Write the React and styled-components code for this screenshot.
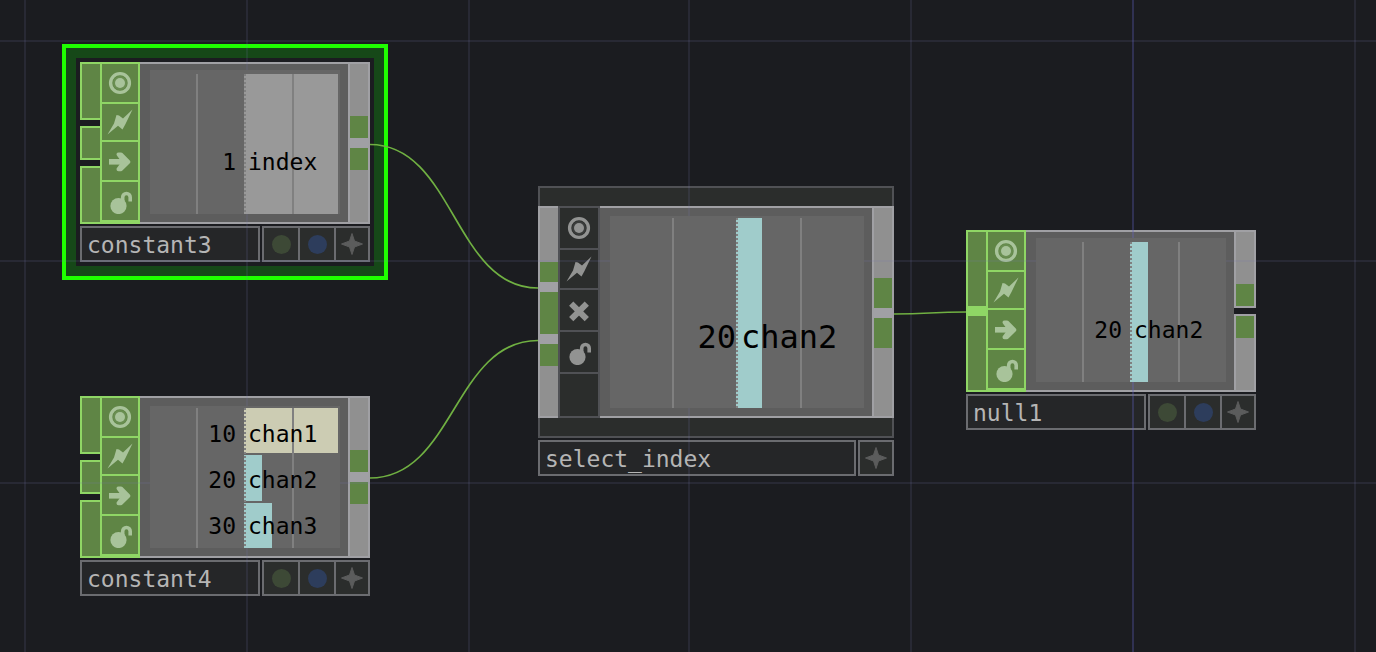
import React, { useState } from 'react';
import { styled, createGlobalStyle } from 'styled-components';

const colors = {
  canvas: '#1b1c20',
  green: '#5f8545',
  greenEdge: '#8fd665',
  grey: '#909090',
  greyEdge: '#a0a0a4',
  dark: '#2b2d2c',
  darkEdge: '#505155',
  footerEdge: '#6b6c70',
};

const slotColors = {
  grey: colors.grey,
  green: colors.green,
  link: colors.greyEdge,
  active: colors.greenEdge,
};

const outLinked = [[['grey', 52], ['green', 22], ['link', 10], ['green', 22], ['grey', 52]]];
const outOpen = [[['grey', 52], ['green', 22]], [['green', 22], ['grey', 52]]];
const inOpen = [[['green', 54]], [['green', 30]], [['green', 54]]];

const nodes = [
  {
    name: 'constant3', x: 80, y: 62, width: 290, lip: 4,
    inputs: inOpen, outputs: outLinked,
    flags: ['view', 'clone', 'bypass', 'lock'],
    channels: [{ value: 1, label: 'index', fill: 100, color: '#999999' }],
  },
  {
    name: 'constant4', x: 80, y: 396, width: 290, lip: 2,
    inputs: inOpen, outputs: outLinked,
    flags: ['view', 'clone', 'bypass', 'lock'],
    channels: [
      { value: 10, label: 'chan1', fill: 100, color: '#ccccb3' },
      { value: 20, label: 'chan2', fill: 19, color: '#a0cccb' },
      { value: 30, label: 'chan3', fill: 30, color: '#a0cccb' },
    ],
  },
  {
    name: 'select_index', x: 538, y: 186, width: 356, large: true, lip: 2,
    inputs: [[['grey', 54], ['green', 20], ['link', 10], ['green', 42], ['link', 10], ['green', 22], ['grey', 50]]],
    outputs: [[['grey', 70], ['green', 30], ['link', 10], ['green', 30], ['grey', 68]]],
    flags: ['view', 'clone', 'cross', 'lock'],
    channels: [{ value: 20, label: 'chan2', fill: 21, color: '#a0cccb' }],
  },
  {
    name: 'null1', x: 966, y: 230, width: 290, lip: 4,
    inputs: [[['green', 74], ['active', 10], ['green', 74]]],
    outputs: outOpen,
    flags: ['view', 'clone', 'bypass', 'lock'],
    channels: [{ value: 20, label: 'chan2', fill: 19, color: '#a0cccb' }],
  },
];

const columns = [24, 246, 468, 688, 910, 1132, 1354];
const rows = [40, 260, 482];

const flagNames = {
  view: 'Viewer active',
  clone: 'Clone immune',
  bypass: 'Bypass',
  cross: 'Bypass',
  lock: 'Lock',
};

const FlagIcon = ({ type }) => (
  <svg width="26" height="26" viewBox="0 0 26 26" aria-hidden="true">
    {type === 'view' && (
      <>
        <circle cx="13" cy="13" r="9.4" fill="none" stroke="currentColor" strokeWidth="3.4" />
        <circle cx="13" cy="13" r="7" fill="currentColor" fillOpacity="0.15" />
        <circle cx="13" cy="13" r="5" fill="currentColor" />
      </>
    )}
    {type === 'clone' && (
      <path d="M0.5 25.500 7 14.500 9.500 6 12 6.500 16 9.500 25.500 0.5 18.500 15 15.500 20.500 11 16.800Z" fill="currentColor" />
    )}
    {type === 'bypass' && (
      <g fill="none" stroke="currentColor" strokeLinejoin="round">
        <path d="M2 13.800H20" strokeWidth="5.600" />
        <path d="M11.500 6.400 14 6.400 21.400 13.800 14 21.200 11.500 21.200 17 13.800Z" strokeWidth="4" />
      </g>
    )}
    {type === 'cross' && (
      <path d="M5.200 6.600 20.800 22.200M20.800 6.600 5.200 22.200" stroke="currentColor" strokeWidth="6" />
    )}
    {type === 'lock' && (
      <>
        <circle cx="11.5" cy="18" r="8.1" fill="currentColor" />
        <path d="M15.700 13V9.200a3.750 3.750 0 0 1 7.500 0V13.500" fill="none" stroke="currentColor" strokeWidth="3.6" />
      </>
    )}
  </svg>
);

const StarIcon = () => (
  <svg width="22" height="22" viewBox="0 0 22 22" aria-hidden="true">
    <path d="M11 0.500 13.500 8 21.500 11 13.500 14 11 21.500 8.500 14 0.500 11 8.500 8Z" fill="#5b5c5c" stroke="#5b5c5c" />
  </svg>
);

const Port = ({ groups, side, tone }) => (
  <PortColumn>
    {groups.map((slots, i) => (
      <PortGroup key={i} $side={side} $tone={tone}>
        {slots.map(([kind, height], j) => (
          <Slot key={j} $kind={kind} $height={height} />
        ))}
      </PortGroup>
    ))}
  </PortColumn>
);

const Node = ({ node, selected, onSelect }) => {
  const { name, x, y, width, large, lip, inputs, outputs, flags, channels } = node;
  return (
    <Frame style={{ left: x, top: y }} $selected={selected} onClick={onSelect}>
      <NodeBox $width={width}>
        {large && <Strip $edge="top" />}
        <Body>
          <Port groups={inputs} side="in" tone={large ? 'grey' : 'green'} />
          <Flags $large={large}>
            {flags.map(flag => (
              <Flag key={flag} type="button" aria-label={flagNames[flag]} $large={large}>
                <FlagIcon type={flag} />
              </Flag>
            ))}
            {large && <FlagBlank />}
          </Flags>
          <Viewer $lip={lip}>
            <Chart $lip={lip}>
              <Channels>
                {channels.map(channel => (
                  <Channel key={channel.label}>
                    <BarTrack>
                      <Bar style={{ width: `${channel.fill}%`, backgroundColor: channel.color }} />
                    </BarTrack>
                  </Channel>
                ))}
                <Guides>
                  <Guide />
                  <Guide $line="solid" />
                  <Guide $line="dotted" />
                  <Guide $line="solid" />
                </Guides>
                <Labels $single={channels.length === 1} $large={large}>
                  {channels.map(channel => (
                    <LabelRow key={channel.label}>
                      <Value $large={large}>{channel.value}</Value>
                      <ChannelName $large={large}>{channel.label}</ChannelName>
                    </LabelRow>
                  ))}
                </Labels>
              </Channels>
            </Chart>
          </Viewer>
          <Port groups={outputs} side="out" tone="grey" />
        </Body>
        {large && <Strip $edge="bottom" />}
        <Footer>
          <NodeName>{name}</NodeName>
          <Actions>
            {!large && (
              <>
                <Action type="button" aria-label="Display"><Dot $color="#3d4936" /></Action>
                <Action type="button" aria-label="Render"><Dot $color="#2d3d5c" /></Action>
              </>
            )}
            <Action type="button" aria-label="Activate viewer"><StarIcon /></Action>
          </Actions>
        </Footer>
      </NodeBox>
    </Frame>
  );
};

const App = () => {
  const [active, setActive] = useState('constant3');
  return (
    <>
      <GlobalStyle />
      <Canvas>
        {nodes.map(node => (
          <Node
            key={node.name}
            node={node}
            selected={node.name === active}
            onSelect={() => setActive(node.name)}
          />
        ))}
        <Network aria-hidden="true">
          {columns.map(x => (
            <rect key={x} x={x} y="0" width="2" height="100%" fill={x === 1132 ? '#6464c8' : '#7878b4'} fillOpacity={x === 1132 ? 0.3 : 0.14} />
          ))}
          {rows.map(y => (
            <rect key={y} x="0" y={y} width="100%" height="2" fill="#7878b4" fillOpacity="0.14" />
          ))}
          <g fill="none" stroke="#70b042" strokeWidth="1.7">
            <path d="M370 144.500C454 144.500 454 288 538 288" />
            <path d="M370 478C454 478 454 340.500 538 340.500" />
            <path d="M894 314C930 314 930 312 966 312" />
          </g>
        </Network>
      </Canvas>
    </>
  );
};

export default App;

const GlobalStyle = createGlobalStyle`
  * {
    box-sizing: border-box;
  }

  body {
    margin: 0;
    background-color: ${colors.canvas};
    font-family: "DejaVu Sans Mono", monospace;
  }
`;

const Canvas = styled.main`
  position: relative;
  min-height: 100vh;
  overflow: hidden;
  background-color: ${colors.canvas};
`;

const Network = styled.svg`
  position: absolute;
  top: 0;
  left: 0;
  width: 100%;
  height: 100%;
  pointer-events: none;
`;

const Frame = styled.section`
  position: absolute;
  box-shadow: ${props => props.$selected
    ? `0 0 0 4px ${colors.canvas}, 0 0 0 14px #164818, 0 0 0 18px #1fff00`
    : 'none'};
`;

const NodeBox = styled.div`
  width: ${props => props.$width}px;
  display: flex;
  flex-direction: column;
`;

const Strip = styled.div`
  height: 20px;
  background-color: ${colors.dark};
  border: 2px solid ${colors.darkEdge};
  border-${props => (props.$edge === 'top' ? 'bottom' : 'top')}: none;
`;

const Body = styled.div`
  display: flex;
`;

const PortColumn = styled.div`
  display: flex;
  flex-direction: column;
  gap: 6px;
`;

const PortGroup = styled.div`
  width: ${props => (props.$side === 'in' ? 20 : 22)}px;
  border: 2px solid ${props => (props.$tone === 'green' ? colors.greenEdge : colors.greyEdge)};
  ${props => props.$side === 'in' && 'border-right: none;'}
`;

const Slot = styled.div`
  height: ${props => props.$height}px;
  background-color: ${props => slotColors[props.$kind]};
`;

const Flags = styled.div`
  width: ${props => (props.$large ? 42 : 40)}px;
  display: grid;
  grid-template-rows: ${props => (props.$large ? '40px 38px 40px 40px 1fr' : '38px 36px 38px 38px')};
  gap: 2px;
  padding: 2px 2px ${props => (props.$large ? 2 : 4)}px;
  background-color: ${props => (props.$large ? colors.darkEdge : colors.greenEdge)};
`;

const Flag = styled.button`
  display: flex;
  align-items: center;
  justify-content: center;
  padding: 0;
  border: none;
  color: ${props => (props.$large ? '#929392' : '#a8c39a')};
  background-color: ${props => (props.$large ? colors.dark : colors.green)};
  cursor: pointer;
`;

const FlagBlank = styled.div`
  background-color: ${colors.dark};
`;

const Viewer = styled.div`
  flex: 1;
  display: flex;
  padding: ${props => 10 - props.$lip}px 8px 8px 10px;
  border: 2px solid ${colors.greyEdge};
  border-width: 2px 0;
  background-color: #5d5d5d;
`;

const Chart = styled.div`
  position: relative;
  z-index: 1;
  flex: 1;
  display: flex;
  padding-top: ${props => props.$lip}px;
  background-color: #666666;
`;

const Channels = styled.div`
  position: relative;
  flex: 1;
  display: flex;
  flex-direction: column;
  gap: 2px;
`;

const Channel = styled.div`
  flex: 1;
  display: flex;
  justify-content: flex-end;
`;

const BarTrack = styled.div`
  width: calc(50% + 1px);
  display: flex;
  padding-right: 2px;
`;

const Bar = styled.div``;

const Guides = styled.div`
  position: absolute;
  inset: 0 0 0 -2px;
  display: grid;
  grid-template-columns: repeat(4, 1fr);
`;

const Guide = styled.div`
  ${props => props.$line === 'solid' && 'border-left: 2px solid #808080;'}
  ${props => props.$line === 'dotted' && `
    background: repeating-linear-gradient(#808080 0 2px, transparent 2px 4px) left / 2px 100% no-repeat;
  `}
`;

const Labels = styled.div`
  position: absolute;
  inset: 0;
  display: flex;
  flex-direction: column;
  gap: 2px;
  padding-top: ${props => (props.$single ? (props.$large ? 48 : 36) : 4)}px;
  font-size: ${props => (props.$large ? 32 : 23)}px;
  line-height: 1;
  color: #000000;
`;

const LabelRow = styled.div`
  flex: 1;
  display: flex;
  align-items: center;
`;

const Value = styled.span`
  width: calc(50% - 1px);
  padding-right: ${props => (props.$large ? 0 : 8)}px;
  text-align: right;
`;

const ChannelName = styled.span`
  padding-left: ${props => (props.$large ? 5 : 4)}px;
`;

const Footer = styled.footer`
  display: flex;
  gap: 2px;
  height: 36px;
  margin-top: 2px;
`;

const NodeName = styled.div`
  flex: 1;
  padding: 2px 0 0 5px;
  border: 2px solid ${colors.footerEdge};
  background-color: #252628;
  color: #b5b5b5;
  font-size: 23px;
  line-height: 30px;
`;

const Actions = styled.div`
  display: flex;
  gap: 2px;
  padding: 2px;
  background-color: ${colors.footerEdge};
`;

const Action = styled.button`
  width: 34px;
  display: flex;
  align-items: center;
  justify-content: center;
  padding: 0;
  border: none;
  background-color: ${colors.dark};
  cursor: pointer;

  &:last-child {
    width: 32px;
  }
`;

const Dot = styled.span`
  width: 19px;
  height: 19px;
  border-radius: 50%;
  background-color: ${props => props.$color};
`;
